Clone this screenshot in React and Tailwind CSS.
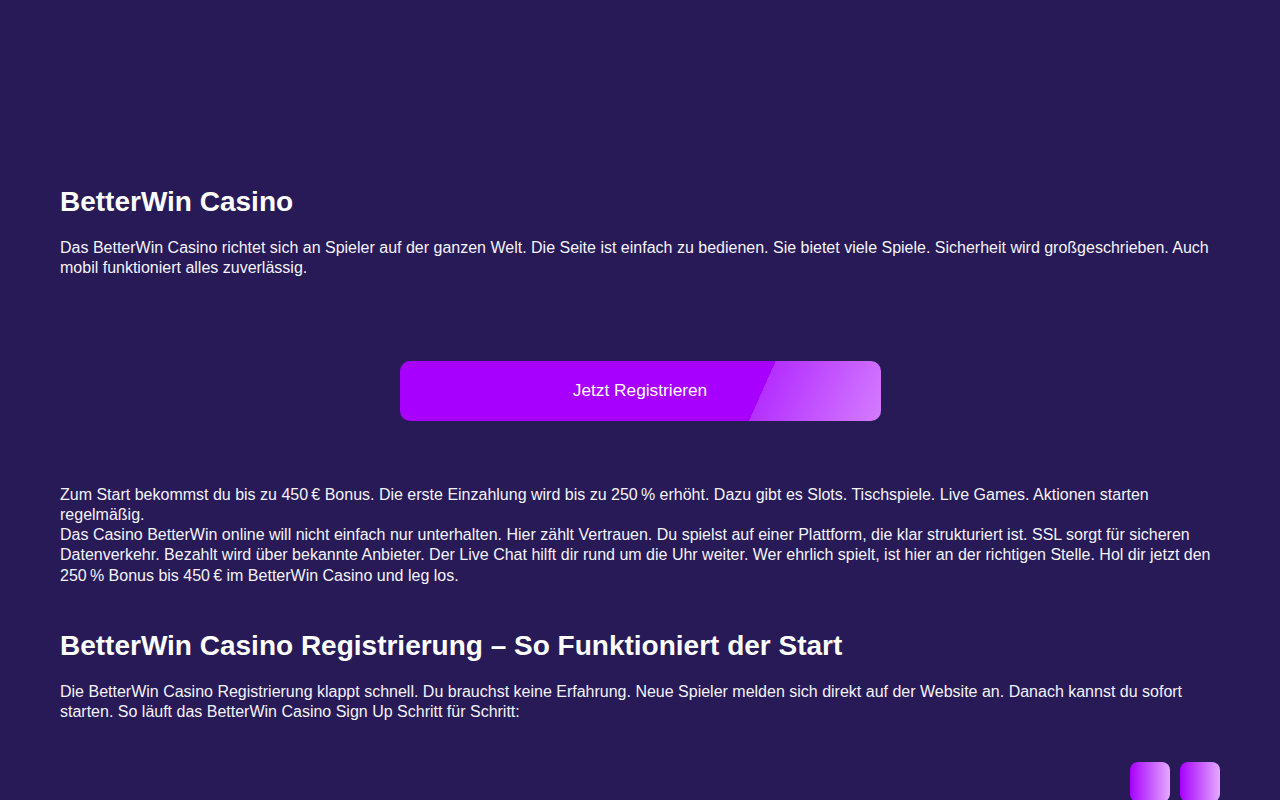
import React from 'react';

function App() {
    return (
        <div className="min-h-screen bg-[#271a56] text-white font-['Liberation_Sans',Arial,sans-serif]">
            <main className="px-[60px] pt-[185px]">
                {/* Intro */}
                <h1 className="text-[28px] leading-[34px] font-bold">BetterWin Casino</h1>
                <p className="mt-[19px] text-[16px] leading-[20.25px] text-[#f4f2fa]">
                    Das BetterWin Casino richtet sich an Spieler auf der ganzen Welt. Die Seite ist einfach zu bedienen. Sie bietet viele Spiele. Sicherheit wird großgeschrieben. Auch mobil funktioniert alles zuverlässig.
                </p>

                {/* CTA */}
                <div className="mt-[82px] flex justify-center">
                    <button className="w-[481px] h-[60px] rounded-[10px] bg-[linear-gradient(114deg,#a800ff_74%,#b42fff_74%,#d47cff_100%)] text-[17.3px] text-white">
                        Jetzt Registrieren
                    </button>
                </div>

                <div className="mt-[64px] text-[16px] leading-[20.25px] text-[#f4f2fa]">
                    <p>
                        Zum Start bekommst du bis zu 450{'\u202F'}€ Bonus. Die erste Einzahlung wird bis zu 250{'\u202F'}% erhöht. Dazu gibt es Slots. Tischspiele. Live Games. Aktionen starten regelmäßig.
                    </p>
                    <p>
                        Das Casino BetterWin online will nicht einfach nur unterhalten. Hier zählt Vertrauen. Du spielst auf einer Plattform, die klar strukturiert ist. SSL sorgt für sicheren Datenverkehr. Bezahlt wird über bekannte Anbieter. Der Live Chat hilft dir rund um die Uhr weiter. Wer ehrlich spielt, ist hier an der richtigen Stelle. Hol dir jetzt den 250{'\u202F'}% Bonus bis 450{'\u202F'}€ im BetterWin Casino und leg los.
                    </p>
                </div>

                {/* Registrierung */}
                <h2 className="mt-[43px] text-[28px] leading-[34px] font-bold">
                    BetterWin Casino Registrierung – So Funktioniert der Start
                </h2>
                <p className="mt-[19px] text-[16px] leading-[20.25px] text-[#f4f2fa]">
                    Die BetterWin Casino Registrierung klappt schnell. Du brauchst keine Erfahrung. Neue Spieler melden sich direkt auf der Website an. Danach kannst du sofort starten. So läuft das BetterWin Casino Sign Up Schritt für Schritt:
                </p>

                <div className="mt-[40px] flex justify-end gap-[10px] pb-10">
                    <div className="w-10 h-10 rounded-[8px] bg-[linear-gradient(90deg,#a800ff,#e4aaff)]"></div>
                    <div className="w-10 h-10 rounded-[8px] bg-[linear-gradient(90deg,#a800ff,#e4aaff)]"></div>
                </div>
            </main>
        </div>
    );
}

export default App;
